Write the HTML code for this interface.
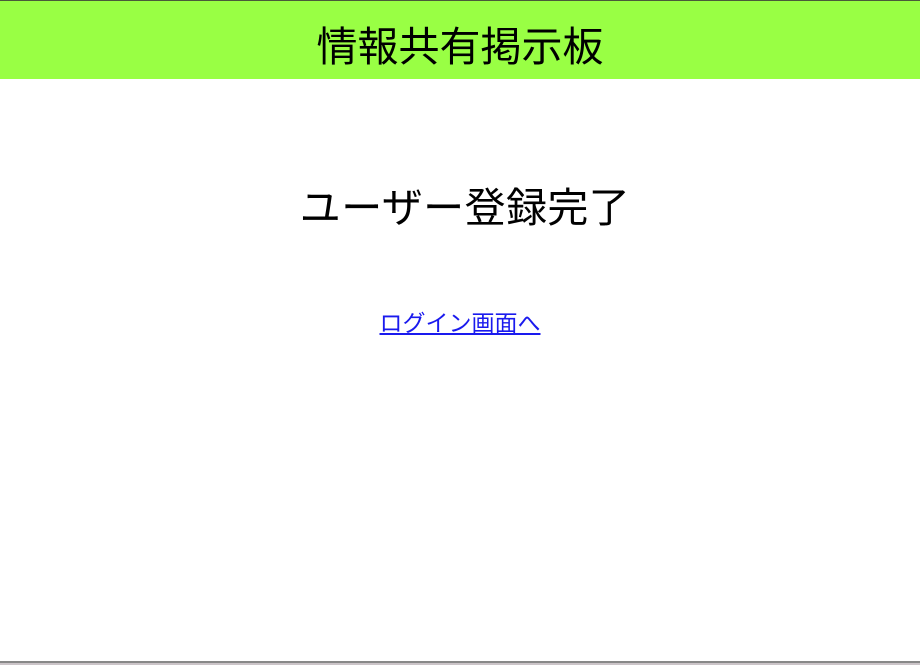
<!DOCTYPE html>
<html><head><meta charset="utf-8"><style>
html,body{margin:0;padding:0;width:920px;height:665px;overflow:hidden;background:#fff;font-family:"Liberation Sans","Noto Sans CJK JP",sans-serif;}
.top{position:absolute;left:0;top:0;width:920px;height:1px;background:#4a5a3a;}
.hdr{position:absolute;left:0;top:1px;width:920px;height:78px;background:#99ff44;}
.t{position:absolute;left:0;width:920px;text-align:center;white-space:nowrap;color:#000;}
.h1{top:20px;font-size:41px;line-height:54px;}
.h2{top:182px;font-size:41px;line-height:52px;letter-spacing:0.4px;padding-left:10px;box-sizing:border-box;}
.lk{top:308px;font-size:23px;line-height:30px;}
.lk a{color:#1a1aee;text-decoration:underline;}
.bot{position:absolute;left:0;top:661px;width:920px;height:2px;background:#888;}
.bot2{position:absolute;left:0;top:663px;width:920px;height:2px;background:#cbc4c8;}
</style></head><body>
<div class="top"></div><div class="hdr"></div>
<div class="t h1">情報共有掲示板</div>
<div class="t h2">ユーザー登録完了</div>
<div class="t lk"><a href="#">ログイン画面へ</a></div>
<div class="bot"></div><div class="bot2"></div>
</body></html>
